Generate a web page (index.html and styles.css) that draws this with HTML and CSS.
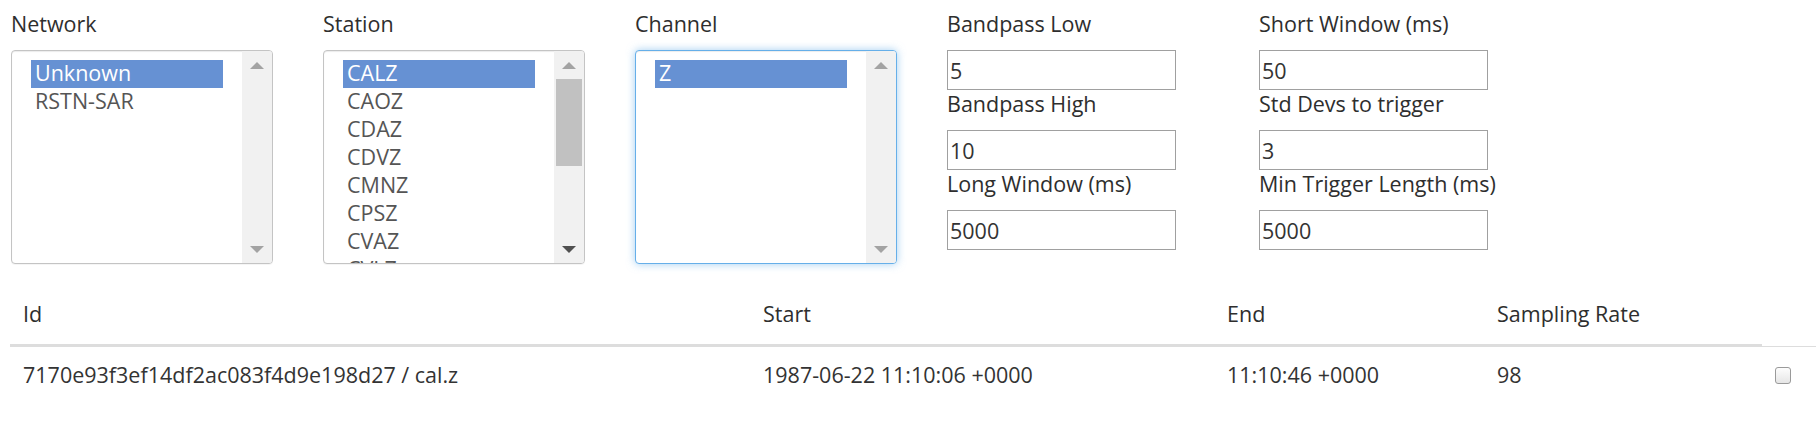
FILE: index.html
```html
<!DOCTYPE html>
<html>
<head>
<meta charset="utf-8">
<title>Filters</title>
<link rel="stylesheet" href="styles.css">
</head>
<body>
<div class="filters">
  <div class="col">
    <div class="label">Network</div>
    <div class="listbox" role="listbox">
      <div class="options">
        <div class="opt selected">Unknown</div>
        <div class="opt">RSTN-SAR</div>
      </div>
      <div class="sbar">
        <div class="sbtn"><span class="tri up"></span></div>
        <div class="track"></div>
        <div class="sbtn"><span class="tri down"></span></div>
      </div>
    </div>
  </div>
  <div class="col">
    <div class="label">Station</div>
    <div class="listbox" role="listbox">
      <div class="options">
        <div class="opt selected">CALZ</div>
        <div class="opt">CAOZ</div>
        <div class="opt">CDAZ</div>
        <div class="opt">CDVZ</div>
        <div class="opt">CMNZ</div>
        <div class="opt">CPSZ</div>
        <div class="opt">CVAZ</div>
        <div class="opt">CVLZ</div>
      </div>
      <div class="sbar">
        <div class="sbtn"><span class="tri up"></span></div>
        <div class="track"><div class="thumb"></div></div>
        <div class="sbtn"><span class="tri down active"></span></div>
      </div>
    </div>
  </div>
  <div class="col">
    <div class="label">Channel</div>
    <div class="listbox focused" role="listbox">
      <div class="options">
        <div class="opt selected">Z</div>
      </div>
      <div class="sbar">
        <div class="sbtn"><span class="tri up"></span></div>
        <div class="track"></div>
        <div class="sbtn"><span class="tri down"></span></div>
      </div>
    </div>
  </div>
  <div class="col">
    <label class="label">Bandpass Low</label>
    <input class="field" type="text" value="5">
    <label class="label">Bandpass High</label>
    <input class="field" type="text" value="10">
    <label class="label">Long Window (ms)</label>
    <input class="field" type="text" value="5000">
  </div>
  <div class="col">
    <label class="label">Short Window (ms)</label>
    <input class="field" type="text" value="50">
    <label class="label">Std Devs to trigger</label>
    <input class="field" type="text" value="3">
    <label class="label">Min Trigger Length (ms)</label>
    <input class="field" type="text" value="5000">
  </div>
</div>

<table class="results">
  <thead>
    <tr>
      <th class="c-id">Id</th>
      <th class="c-start">Start</th>
      <th class="c-end">End</th>
      <th class="c-rate">Sampling Rate</th>
      <th class="c-sel"></th>
    </tr>
  </thead>
  <tbody>
    <tr>
      <td>7170e93f3ef14df2ac083f4d9e198d27 / cal.z</td>
      <td>1987-06-22 11:10:06 +0000</td>
      <td>11:10:46 +0000</td>
      <td>98</td>
      <td class="c-sel"><input class="check" type="checkbox"></td>
    </tr>
  </tbody>
</table>
</body>
</html>
```

FILE: styles.css
```css
html, body {
  margin: 0;
  padding: 0;
  background: #fff;
}

body {
  font-family: "Open Sans", "Liberation Sans", sans-serif;
  font-size: 21.5px;
  color: #333;
}

.filters {
  display: flex;
  gap: 50px;
  padding: 10px 0 0 11px;
  align-items: flex-start;
}

.col {
  width: 262px;
  display: flex;
  flex-direction: column;
  align-items: flex-start;
}

.label {
  display: block;
  line-height: 28px;
  height: 30px;
  margin-bottom: 10px;
  font-weight: 500;
  color: #2e2e2e;
  white-space: nowrap;
}

.listbox {
  box-sizing: border-box;
  width: 262px;
  height: 214px;
  border: 1px solid #c4c4c4;
  border-radius: 4px;
  box-shadow: inset 0 1px 1px rgba(0, 0, 0, 0.08), 0 1px 0 rgba(0,0,0,0.04);
  display: flex;
  overflow: hidden;
  background: #fff;
}

.listbox.focused {
  border-color: #66afe9;
  box-shadow: inset 0 1px 1px rgba(0, 0, 0, 0.075), 0 0 8px rgba(102, 175, 233, 0.6);
}

.options {
  flex: 1;
  padding: 9px 19px 0 19px;
  overflow: hidden;
}

.opt {
  height: 28px;
  line-height: 26px;
  padding-left: 4px;
  color: #555;
  white-space: nowrap;
}

.opt.selected {
  background: #6691d3;
  color: #fff;
}

.sbar {
  width: 30px;
  background: #f1f1f1;
  display: flex;
  flex-direction: column;
}

.sbtn {
  height: 28px;
  display: flex;
  align-items: center;
  justify-content: center;
}

.track {
  flex: 1;
  padding: 0 2px;
}

.thumb {
  height: 87px;
  background: #c1c1c1;
}

.tri {
  width: 0;
  height: 0;
  border-left: 7px solid transparent;
  border-right: 7px solid transparent;
}

.tri.up {
  border-bottom: 7px solid #a3a3a3;
}

.tri.down {
  border-top: 7px solid #a3a3a3;
}

.tri.down.active {
  border-top-color: #505050;
}

.field {
  box-sizing: border-box;
  width: 229px;
  height: 40px;
  margin: 0;
  padding: 0 2px;
  border: 1px solid #a0a0a0;
  font-family: inherit;
  font-size: 21.5px;
  color: #333;
  background: #fff;
}

.results {
  margin: 26px 0 0 10px;
  width: 1806px;
  border-collapse: separate;
  border-spacing: 0;
  table-layout: fixed;
}

.results th {
  text-align: left;
  font-weight: 500;
  line-height: 30px;
  padding: 9px 13px 15px;
  border-bottom: 3px solid #ddd;
  color: #2e2e2e;
  white-space: nowrap;
}

.results th.c-sel {
  border-bottom: 1px solid #ddd;
}

.c-id { width: 714px; }
.c-start { width: 438px; }
.c-end { width: 244px; }
.c-rate { width: 252px; }
.c-sel { width: 28px; }

.results td {
  line-height: 30px;
  padding: 13px 13px;
  color: #333;
  white-space: nowrap;
  vertical-align: middle;
}

.check {
  appearance: none;
  -webkit-appearance: none;
  display: block;
  box-sizing: border-box;
  width: 16px;
  height: 17px;
  margin: 0;
  border: 1px solid #9a9a9a;
  border-radius: 3px;
  background: linear-gradient(#fdfdfd, #e6e6e6);
}
```
